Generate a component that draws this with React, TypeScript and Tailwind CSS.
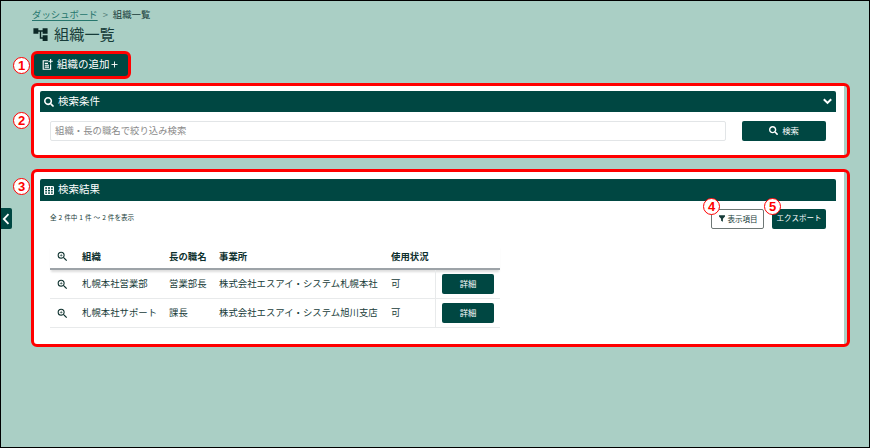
import type { ReactNode } from "react";
import { FaSearch } from "react-icons/fa";
import { MdAccountTree, MdZoomIn } from "react-icons/md";

const rows = [
  { org: "札幌本社営業部", head: "営業部長", office: "株式会社エスアイ・システム札幌本社", status: "可" },
  { org: "札幌本社サポート", head: "課長", office: "株式会社エスアイ・システム旭川支店", status: "可" },
];

function Marker({ n, className }: { n: number; className: string }) {
  return (
    <span
      className={`absolute z-10 flex size-[17px] items-center justify-center rounded-full border-[1.5px] border-[#ff0000] bg-white font-['Liberation_Sans',sans-serif] text-[13px] leading-none font-bold text-[#ff0000] ${className}`}
    >
      {n}
    </span>
  );
}

function GridIcon() {
  return (
    <svg viewBox="0 0 10 9" className="h-[9px] w-[10px]" fill="none" stroke="currentColor">
      <rect x="0.6" y="0.6" width="8.8" height="7.8" rx="0.6" strokeWidth="1.2" />
      <path d="M0 3.3H10M0 5.9H10M3.5 0V9M6.5 0V9" strokeWidth="1" />
    </svg>
  );
}

function AddDocumentIcon() {
  return (
    <svg viewBox="0 0 11 11" className="mr-1 size-[11px]" fill="none" stroke="currentColor" strokeWidth="1.1">
      <path d="M6 1.8H1.2V10.2H8.6V5.2" />
      <path d="M2.8 4.4H6M2.8 6.2H7M2.8 8.1H7M8.6 0V4.4M6.4 2.2H10.8" />
    </svg>
  );
}

function FilterIcon() {
  return (
    <svg viewBox="0 0 6 7" className="h-[7px] w-[6px]" fill="currentColor">
      <path d="M0 0.3H6V1.4L3.9 3.8V6.8L2.1 5.8V3.8L0 1.4Z" />
    </svg>
  );
}

function PanelHeader({ icon, title, end }: { icon: ReactNode; title: string; end?: ReactNode }) {
  return (
    <div className="flex items-center rounded-t-xs bg-[#004742] pr-1 pl-1 text-white">
      {icon}
      <h2 className="-mt-px ml-1 text-[10.5px] leading-none">{title}</h2>
      <span className="ml-auto">{end}</span>
    </div>
  );
}

export default function App() {
  return (
    <div
      lang="ja"
      className="relative h-[448px] w-[870px] overflow-hidden border border-black bg-[#aacfc5] pt-[7px] pr-[19px] pl-[30px] font-['Noto_Sans_CJK_JP',sans-serif] text-[9.4px] leading-none text-[#173c39]"
    >
      <button className="absolute top-[207px] left-0 flex h-[21px] w-[11px] items-center justify-center rounded-r-xs bg-[#004742] text-white">
        <svg viewBox="0 0 8 12" className="mr-[2px] h-3 w-2" fill="none" stroke="currentColor" strokeWidth="1.8">
          <path d="M6.5 1.2L1.8 6L6.5 10.8" />
        </svg>
      </button>

      <nav className="flex h-[13px] items-center pl-px">
        <a className="text-[#26766d] underline underline-offset-2">ダッシュボード</a>
        <span className="mx-[5px] text-[9.4px] text-[#55817a]">&gt;</span>
        <span>組織一覧</span>
      </nav>
      <h1 className="mt-1 flex h-[18px] items-center pl-px text-[15.2px]">
        <MdAccountTree className="mr-[5px] size-[17px] text-[#0c2826]" />
        組織一覧
      </h1>

      <div className="relative mt-[8px] w-[100px]">
        <Marker n={1} className="top-[6px] -left-[18px]" />
        <button className="flex h-7 w-full items-center rounded-[6px] border-3 border-[#ff0000] bg-[#004742] pb-px pl-2 text-[10.5px] text-white">
          <AddDocumentIcon />
          組織の追加
          <svg viewBox="0 0 7 7" className="ml-px size-[7px]" stroke="currentColor" strokeWidth="0.9">
            <path d="M3.5 0.5V6.5M0.5 3.5H6.5" />
          </svg>
        </button>
      </div>

      <section className="relative mt-1 grid h-[75px] grid-rows-[21px_20px] gap-y-[9px] rounded-[6px] border-3 border-[#ff0000] bg-[linear-gradient(to_right,white_810px,#aacfc5_810px)] pt-[5px] pr-[11px] pl-[6px]">
        <Marker n={2} className="top-[26px] -left-[21px]" />
        <PanelHeader
          icon={<FaSearch className="size-[10px]" />}
          title="検索条件"
          end={
            <svg viewBox="0 0 9 7" className="h-[7px] w-[9px]" fill="none" stroke="currentColor" strokeWidth="2">
              <path d="M0.8 1.2L4.5 4.9L8.2 1.2" />
            </svg>
          }
        />
        <div className="flex gap-4 pr-[10px] pl-[10px]">
          <input
            className="min-w-0 flex-1 rounded-xs border border-[#e2e5e7] bg-white px-1 pb-[2px] text-[9.4px] outline-none placeholder:text-[#8a8a8a]"
            placeholder="組織・長の職名で絞り込み検索"
          />
          <button className="flex w-[84px] items-center justify-center gap-1 rounded-xs bg-[#004742] pb-[2px] text-[8.4px] text-white">
            <FaSearch className="size-[9px]" />
            検索
          </button>
        </div>
      </section>

      <section className="relative mt-[11px] h-[178px] rounded-[6px] border-3 border-[#ff0000] bg-[linear-gradient(to_right,white_810px,#aacfc5_810px)] pt-[7px] pr-[11px] pl-[6px]">
        <Marker n={3} className="top-[6px] -left-[21px]" />
        <div className="grid h-[22px]">
          <PanelHeader icon={<GridIcon />} title="検索結果" />
        </div>
        <div className="mt-2 flex h-5 gap-2 pr-[10px] pl-[10px]">
          <p className="mr-auto pt-[5px] text-[6.6px] [word-spacing:0.5px]">全 2 件中 1 件 ～ 2 件を表示</p>
          <div className="relative flex">
            <Marker n={4} className="-top-[11px] -left-[8px]" />
            <button className="flex w-[53px] items-center justify-center gap-[3px] rounded-xs border border-[#6e7775] bg-white pb-px pl-px text-[7.5px]">
              <FilterIcon />
              表示項目
            </button>
          </div>
          <div className="relative flex">
            <Marker n={5} className="-top-[11px] -left-[8px]" />
            <button className="w-[54px] rounded-xs bg-[#004742] pb-[2px] text-[7.5px] text-white">エクスポート</button>
          </div>
        </div>

        <table className="mt-[15px] ml-[10px] w-[450px] table-fixed border-separate border-spacing-0 text-left">
          <colgroup>
            <col className="w-[32px]" />
            <col className="w-[87px]" />
            <col className="w-[50px]" />
            <col className="w-[172px]" />
            <col className="w-[44px]" />
            <col className="w-[65px]" />
          </colgroup>
          <thead className="shadow-[0_3px_2px_-1px_#00000022]">
            <tr className="h-[26px] text-[#0d302d] *:border-b-2 *:border-[#9da3a8] *:p-0 *:pt-px *:font-bold">
              <th>
                <MdZoomIn className="ml-[6px] size-[13px]" />
              </th>
              <th>組織</th>
              <th>長の職名</th>
              <th>事業所</th>
              <th>使用状況</th>
              <th />
            </tr>
          </thead>
          <tbody>
            {rows.map((r) => (
              <tr key={r.org} className="h-[29px] whitespace-nowrap *:border-b *:border-[#e8eaeb] *:p-0">
                <td>
                  <MdZoomIn className="ml-[6px] size-[13px] text-[#0d302d]" />
                </td>
                <td>{r.org}</td>
                <td>{r.head}</td>
                <td>{r.office}</td>
                <td>{r.status}</td>
                <td className="border-l">
                  <button className="ml-[6px] block h-5 w-[52px] rounded-xs bg-[#004742] pb-px text-[8.4px] text-white">詳細</button>
                </td>
              </tr>
            ))}
          </tbody>
        </table>
      </section>
    </div>
  );
}
